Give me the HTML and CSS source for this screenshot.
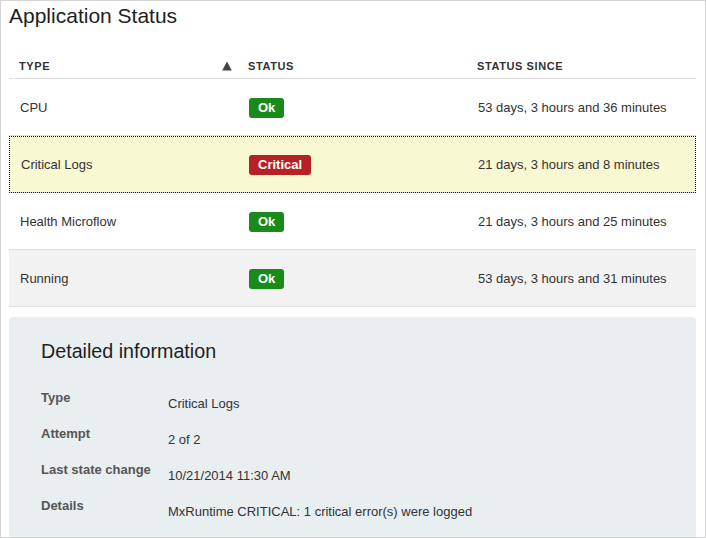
FILE: index.html
```html
<!DOCTYPE html>
<html>
<head>
<meta charset="utf-8">
<link rel="stylesheet" href="styles.css">
</head>
<body>
<div class="frame">
  <h1 class="title">Application Status</h1>
  <table class="status-table">
    <colgroup><col class="c1"><col class="c2"><col class="c3"></colgroup>
    <thead>
      <tr>
        <th class="sort-col"><span>TYPE</span><svg class="sort-icon" width="10" height="10" viewBox="0 0 10 10"><path d="M5 0.5 L9.8 9.5 L0.2 9.5 Z" fill="#444"/></svg></th>
        <th>STATUS</th>
        <th>STATUS SINCE</th>
      </tr>
    </thead>
    <tbody>
      <tr>
        <td>CPU</td>
        <td><span class="badge ok">Ok</span></td>
        <td>53 days, 3 hours and 36 minutes</td>
      </tr>
      <tr class="selected">
        <td>Critical Logs</td>
        <td><span class="badge critical">Critical</span></td>
        <td>21 days, 3 hours and 8 minutes</td>
      </tr>
      <tr>
        <td>Health Microflow</td>
        <td><span class="badge ok">Ok</span></td>
        <td>21 days, 3 hours and 25 minutes</td>
      </tr>
      <tr class="striped">
        <td>Running</td>
        <td><span class="badge ok">Ok</span></td>
        <td>53 days, 3 hours and 31 minutes</td>
      </tr>
    </tbody>
  </table>
  <section class="details">
    <h2 class="details-title">Detailed information</h2>
    <div class="details-grid">
      <div class="label">Type</div><div class="value">Critical Logs</div>
      <div class="label">Attempt</div><div class="value">2 of 2</div>
      <div class="label">Last state change</div><div class="value">10/21/2014 11:30 AM</div>
      <div class="label">Details</div><div class="value">MxRuntime CRITICAL: 1 critical error(s) were logged</div>
    </div>
  </section>
</div>
</body>
</html>
```

FILE: styles.css
```css
html, body {
  margin: 0;
  padding: 0;
  background: #fff;
}
body {
  font-family: "Liberation Sans", Arial, sans-serif;
  color: #333;
}
.frame {
  box-sizing: border-box;
  width: 706px;
  height: 538px;
  border: 1px solid #d3d3d3;
  padding: 3px 9px 0 8px;
  overflow: hidden;
}
.title {
  margin: 0;
  font-size: 21px;
  font-weight: normal;
  line-height: 24px;
  color: #1e1e1e;
}
.status-table {
  width: 687px;
  margin-top: 22px;
  border-collapse: collapse;
  table-layout: fixed;
  font-size: 13px;
}
.status-table col { width: 229px; }
.status-table th {
  text-align: left;
  font-size: 11px;
  font-weight: bold;
  letter-spacing: 0.6px;
  line-height: 16px;
  padding: 8px 10px 4px;
  color: #333;
  border-bottom: 1px solid #dedede;
}
.status-table th.sort-col {
  padding-right: 6px;
}
.sort-col span { float: left; }
.sort-icon {
  float: right;
  margin-top: 3px;
}
.status-table td {
  height: 55px;
  padding: 1px 10px 0 11px;
  vertical-align: middle;
  border-bottom: 1px solid #dedede;
  line-height: 18px;
}
.status-table td:nth-child(2) {
  padding-left: 10px;
}
.status-table tr.striped td {
  background: #f2f2f2;
}
.status-table tr.selected td {
  background: #f8f8d2;
}
.status-table tr.selected {
  outline: 1px dotted #111;
  outline-offset: -1px;
}
.status-table tr.selected td:first-child {
  padding-left: 12px;
}
.badge {
  display: inline-block;
  margin-left: 1px;
  height: 20px;
  line-height: 20px;
  padding: 0 9px;
  border-radius: 3px;
  color: #fff;
  font-weight: bold;
  font-size: 13px;
  vertical-align: middle;
}
.badge.ok { background: #1a8a1a; }
.badge.critical { background: #b72126; }

.details {
  margin-top: 10px;
  background: #e9eef1;
  border-radius: 4px 4px 0 0;
  padding: 22px 32px 20px;
  height: 240px;
}
.details-title {
  margin: 0;
  font-size: 19.7px;
  font-weight: normal;
  line-height: 24px;
  color: #1e1e1e;
}
.details-grid {
  margin-top: 26px;
  display: grid;
  grid-template-columns: 127px 1fr;
  grid-auto-rows: 36px;
  font-size: 13px;
  line-height: 18px;
}
.label {
  font-weight: bold;
  color: #555;
}
.value {
  padding-top: 6px;
  color: #333;
}
```
